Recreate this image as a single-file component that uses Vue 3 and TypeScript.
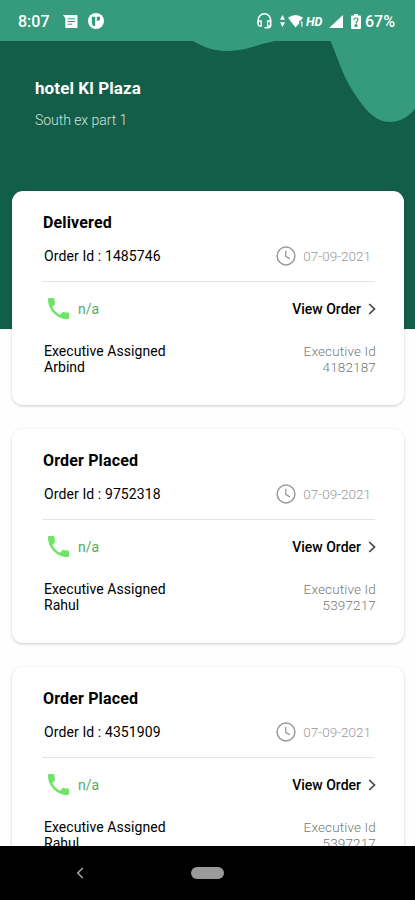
<script setup lang="ts">
interface Order {
  status: string
  orderId: string
  date: string
  phone: string
  executive: string
  executiveId: string
}

const orders: Order[] = [
  { status: 'Delivered', orderId: '1485746', date: '07-09-2021', phone: 'n/a', executive: 'Arbind', executiveId: '4182187' },
  { status: 'Order Placed', orderId: '9752318', date: '07-09-2021', phone: 'n/a', executive: 'Rahul', executiveId: '5397217' },
  { status: 'Order Placed', orderId: '4351909', date: '07-09-2021', phone: 'n/a', executive: 'Rahul', executiveId: '5397217' },
]
</script>

<template>
  <div class="screen">
    <header class="status-bar">
      <span class="time">8:07</span>
      <svg class="ic-message" viewBox="0 0 15 13" width="15" height="13">
        <path d="M0 0h13.5q1 0 1 1v11q0 1-1 1H3.300q-1 0-1-1V3.200z" fill="#fff" />
        <path d="M4.500 3.800h7.500M4.500 6.500h7.500M4.500 9.200h4.500" stroke="#359b7c" stroke-width="1" />
      </svg>
      <svg class="ic-app" viewBox="0 0 16 16" width="16" height="16">
        <circle cx="8" cy="8" r="8" fill="#fff" />
        <path d="M3.800 3.800h3.400v9.200H5.600q-1.800-1.400-1.800-3.600z" fill="#359b7c" />
        <path d="M8.800 3.800h3.200v2.400q-.6 1.600-3.200 1.800z" fill="#359b7c" />
      </svg>
      <span class="spacer"></span>
      <svg class="ic-headset" viewBox="0 0 15 16" width="15" height="16">
        <path d="M1.200 11V7a6.200 6.200 0 0 1 12.400 0v5q0 2.800-2.800 2.800H7.500" fill="none" stroke="#fff" stroke-width="1.500" />
        <path d="M1.200 8h3v5H3q-1.800 0-1.800-1.800zM10.600 8h3v5h-3z" fill="none" stroke="#fff" stroke-width="1.300" />
      </svg>
      <svg class="ic-data" viewBox="0 0 5 12" width="5" height="12">
        <path d="M2.500 0L5 4.800H0zM2.500 12L5 7.200H0z" fill="#fff" />
      </svg>
      <svg class="ic-wifi" viewBox="0 0 16 13" width="16" height="13">
        <path d="M0 2.800Q7.500-2.600 15 2.800L12.800 5.500h-1.600v3L7.500 12.600z" fill="#fff" />
        <path d="M12.400 6.500h2.200v5.300h-1.400V7.800h-.8z" fill="#fff" opacity=".8" />
      </svg>
      <span class="hd">HD</span>
      <svg class="ic-signal" viewBox="0 0 14 13" width="14" height="13">
        <path d="M14 0v13H0z" fill="#fff" />
      </svg>
      <svg class="ic-battery" viewBox="0 0 10 15" width="10" height="15">
        <path d="M3 0h4v1.600h2q1 0 1 1V14q0 1-1 1H1q-1 0-1-1V2.600q0-1 1-1h2z" fill="#fff" />
        <path d="M3 5.800q0-1.800 2-1.800t2 1.800q0 1.200-1.200 1.800L5 9.500M4.200 10.800h1.600v1.500H4.200z" fill="none" stroke="#359b7c" stroke-width="1.200" />
      </svg>
      <span class="percent">67%</span>
    </header>

    <main class="content">
      <section class="hero">
        <svg class="waves" viewBox="0 0 415 90" width="415" height="90">
          <path d="M193 0C207 8 216 10 228 10C246 10 259 3 275 0z" fill="#359b7c" />
          <path d="M330.500 0C339 20 342 32 351 47C365 70 376 81 390 81C400 81 408 76 415 68V0z" fill="#359b7c" />
        </svg>
        <h1 class="hotel">hotel Kl Plaza</h1>
        <p class="address">South ex part 1</p>
      </section>

      <section class="orders">
        <article v-for="order in orders" :key="order.orderId" class="card">
          <h2 class="title">{{ order.status }}</h2>
          <div class="row order-row">
            <span class="order-id">Order Id : {{ order.orderId }}</span>
            <span class="date">
              <svg viewBox="0 0 20 20" width="20" height="20" fill="none" stroke="#999">
                <circle cx="10" cy="10" r="8.900" stroke-width="1.500" />
                <path d="M9.800 4.800v5.600l4 2.500" stroke-width="1.300" />
              </svg>
              <span class="date-text">{{ order.date }}</span>
            </span>
          </div>
          <div class="row call-row">
            <span class="phone">
              <svg viewBox="3 3 18 18" width="21" height="21">
                <path d="M6.620 10.790c1.440 2.830 3.760 5.140 6.590 6.590l2.200-2.200c.27-.27.67-.36 1.020-.24 1.120.37 2.330.57 3.570.57.550 0 1 .45 1 1V20c0 .55-.45 1-1 1-9.390 0-17-7.610-17-17 0-.55.45-1 1-1h3.500c.55 0 1 .45 1 1 0 1.250.2 2.450.57 3.570.11.35.03.74-.25 1.020z" fill="#6fe466" />
              </svg>
              <span class="phone-text">{{ order.phone }}</span>
            </span>
            <span class="view">
              <span class="view-text">View Order</span>
              <svg viewBox="0 0 8 12" width="8" height="12">
                <path d="M1.200 1l5.300 5-5.300 5" fill="none" stroke="#444" stroke-width="1.700" />
              </svg>
            </span>
          </div>
          <div class="row exec-row">
            <div class="exec">Executive Assigned<br />{{ order.executive }}</div>
            <div class="exec-id">Executive Id<br />{{ order.executiveId }}</div>
          </div>
        </article>
      </section>
    </main>

    <nav class="nav-bar">
      <svg class="back" viewBox="0 0 8 12" width="8" height="12">
        <path d="M6.800 1L1.800 6l5 5" fill="none" stroke="#a6a6a6" stroke-width="1.600" />
      </svg>
      <span class="home"></span>
      <span></span>
    </nav>
  </div>
</template>

<style>
body {
  margin: 0;
  background: #fff;
}
</style>

<style scoped>
.screen {
  width: 415px;
  height: 900px;
  display: flex;
  flex-direction: column;
  overflow: hidden;
  background: #fefefe;
  font-family: Roboto, "Liberation Sans", sans-serif;
  color: #000;
}
.screen svg {
  display: block;
  flex: none;
}
.status-bar {
  flex: none;
  height: 41px;
  box-sizing: border-box;
  padding: 1px 20px 0 18px;
  display: flex;
  align-items: center;
  background: #359b7c;
  color: #fff;
}
.time {
  font-size: 16px;
  font-weight: 500;
  width: 45px;
}
.ic-app {
  margin-left: 10px;
}
.spacer {
  flex: 1;
}
.ic-data {
  margin-left: 8px;
}
.ic-wifi {
  margin-left: 3px;
}
.hd {
  margin-left: 2px;
  width: 18px;
  font-size: 12.5px;
  font-weight: 700;
  font-style: italic;
}
.ic-signal {
  margin-left: 5px;
}
.ic-battery {
  margin-left: 8px;
}
.percent {
  margin-left: 4px;
  width: 30px;
  font-size: 16px;
  font-weight: 500;
  white-space: nowrap;
}
.content {
  flex: 1;
  min-height: 0;
  overflow: hidden;
}
.hero {
  position: relative;
  height: 288px;
  box-sizing: border-box;
  padding: 36px 35px 0;
  background: #125e49;
}
.waves {
  position: absolute;
  top: 0;
  left: 0;
}
.hotel {
  margin: 0;
  font-size: 17px;
  line-height: 22px;
  font-weight: 700;
  letter-spacing: 0.1px;
  color: #fff;
}
.address {
  margin: 11px 0 0;
  font-size: 14px;
  line-height: 20px;
  font-weight: 300;
  letter-spacing: -0.05px;
  color: #d5e4df;
}
.orders {
  position: relative;
  margin-top: -138px;
  padding: 0 11px 0 12px;
  display: flex;
  flex-direction: column;
  gap: 24px;
}
.card {
  height: 214px;
  box-sizing: border-box;
  padding: 22px 28px 0 31px;
  border-radius: 11px;
  background: #fff;
  box-shadow: 0 1px 3px rgba(0, 0, 0, 0.2);
}
.title {
  margin: 0;
  font-size: 16px;
  line-height: 20px;
  font-weight: 700;
  letter-spacing: 0.15px;
}
.row {
  display: flex;
  justify-content: space-between;
  align-items: center;
}
.order-row {
  height: 46px;
  margin: 0 1px 0 -1px;
  padding: 0 4px 2px 2px;
  border-bottom: 1px solid #e4e4e4;
}
.order-id {
  font-size: 14px;
  font-weight: 400;
  letter-spacing: 0.1px;
}
.date,
.phone,
.view {
  display: flex;
  align-items: center;
}
.date-text {
  margin-left: 7px;
  font-size: 13.5px;
  font-weight: 300;
  color: #999;
}
.call-row {
  height: 53px;
  padding-left: 5px;
}
.phone-text {
  margin-left: 9px;
  font-size: 14px;
  color: #55aa62;
}
.view-text {
  margin-right: 7px;
  font-size: 14px;
  font-weight: 500;
}
.exec-row {
  padding: 8px 0 0 1px;
  font-size: 13.5px;
  line-height: 16px;
}
.exec {
  font-size: 14px;
  font-weight: 400;
  letter-spacing: 0.05px;
}
.exec-id {
  font-weight: 300;
  letter-spacing: 0.15px;
  text-align: right;
  color: #777;
}
.nav-bar {
  flex: none;
  height: 54px;
  box-sizing: border-box;
  padding: 0 77px 0 76px;
  display: grid;
  grid-template-columns: 1fr 33px 1fr;
  align-items: center;
  background: #000;
}
.home {
  height: 12px;
  border-radius: 6px;
  background: #9a9a9a;
}
</style>
